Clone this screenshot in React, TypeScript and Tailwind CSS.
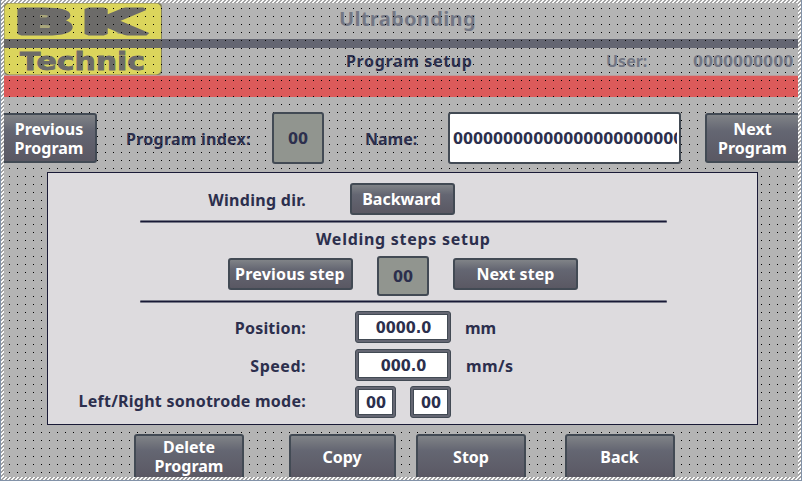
import type { ReactNode } from 'react';

const DIGITS = "font-['DejaVu_Sans_Condensed','DejaVu_Sans',sans-serif] [font-stretch:condensed]";

function Button({ className, children }: { className: string; children: ReactNode }) {
  return (
    <button
      className={`relative z-10 flex shrink-0 items-center justify-center whitespace-nowrap rounded-[3px] border-2 border-[#424a54] bg-linear-to-b from-[#808387] via-[#646672] via-35% to-[#5a5863] text-center leading-[19px] text-white ${className}`}
    >
      {children}
    </button>
  );
}

function Index({ className, children }: { className: string; children: ReactNode }) {
  return (
    <div
      className={`relative z-10 flex w-[52px] shrink-0 items-center justify-center rounded-[3px] border-2 border-[#424a54] bg-[#91958f] ${DIGITS} ${className}`}
    >
      {children}
    </div>
  );
}

function Field({ className, children }: { className: string; children: ReactNode }) {
  return (
    <div className={`h-8 shrink-0 rounded-[3px] border border-[#424a54] bg-[#646672] p-[2px] ${className}`}>
      <div className={`flex h-full items-center justify-center border border-[#424a54] bg-white pl-[1px] ${DIGITS}`}>
        {children}
      </div>
    </div>
  );
}

function Label({ className = '', children }: { className?: string; children: ReactNode }) {
  return <div className={`w-[258px] shrink-0 text-right ${className}`}>{children}</div>;
}

function Divider({ className }: { className: string }) {
  return <div className={`ml-[92px] h-[3px] w-[527px] rounded-full border-y border-[#777988] bg-[#191a36] ${className}`} />;
}

function GridDots() {
  return (
    <svg className="pointer-events-none absolute inset-0 z-[5] h-full w-full" shapeRendering="crispEdges">
      <defs>
        <pattern id="grid-dots" x="5" y="5" width="8" height="8" patternUnits="userSpaceOnUse">
          <rect width="1" height="1" fill="#000" />
        </pattern>
      </defs>
      <rect width="100%" height="100%" fill="url(#grid-dots)" />
    </svg>
  );
}

function Logo() {
  return (
    <svg className="block h-[72px] w-[158px] shrink-0" viewBox="0 0 158 72">
      <rect width="158" height="72" rx="4" fill="#85835f" />
      <rect x="0.5" y="0.5" width="156.5" height="71" rx="5" fill="#dbd55c" />
      <rect x="33" y="8" width="20" height="19" fill="#a9a67a" />
      <path d="M104 21L114 31H122L110 19Z" fill="#a9a67a" />
      <g
        fontFamily="DejaVu Sans"
        fontWeight="bold"
        fontSize="33"
        fill="#6c6b69"
        stroke="#6c6b69"
        strokeWidth="3.2"
        strokeLinejoin="bevel"
      >
        <text x="10" y="31.2" textLength="60.5" lengthAdjust="spacingAndGlyphs">B</text>
        <text x="77" y="31.2" textLength="63" lengthAdjust="spacingAndGlyphs">K</text>
      </g>
      <rect y="36" width="158" height="9" fill="#6a6968" />
      <text
        x="16"
        y="67"
        fontFamily="DejaVu Sans"
        fontWeight="bold"
        fontSize="24.5"
        textLength="125"
        lengthAdjust="spacingAndGlyphs"
        fill="#6c6b69"
        stroke="#6c6b69"
        strokeWidth="0.8"
      >
        Technic
      </text>
    </svg>
  );
}

export default function App() {
  return (
    <div className="h-[481px] w-[802px] border border-t-0 border-[#8292a8] bg-[repeating-linear-gradient(135deg,#a2a2a2_0,#a2a2a2_0.9px,#fbfbfb_0.9px,#fbfbfb_2.828px)] px-[3px] pt-[3px] font-['Noto_Sans',sans-serif] text-[16px] leading-[19px] font-bold text-[#2c2f4d]">
      <div className="relative flex h-[474px] w-[794px] flex-col overflow-hidden bg-[#b4b4b4]">
        <GridDots />

        <header className="flex h-[72px] shrink-0">
          <Logo />
          <div className="flex flex-1 flex-col">
            <div className="h-9 pl-[177px] text-[20px] leading-[32px] tracking-[0.35px] text-[#737784]">Ultrabonding</div>
            <div className="h-[9px] bg-[#646672]" />
            <div className="flex h-[27px] pt-[4px]">
              <span className="ml-[184px] w-[260px] shrink-0 tracking-[0.65px]">Program setup</span>
              <span className="w-[87px] shrink-0 text-[#737784]">User:</span>
              <span className={`shrink-0 text-[#737784] ${DIGITS}`}>0000000000</span>
            </div>
          </div>
        </header>
        <div className="h-[22px] shrink-0 border-t border-[#bf9a9a] bg-[#dc5a5a]" />

        <section className="mt-[15px] flex h-[52px] shrink-0 items-center">
          <Button className="-ml-[4px] h-[50px] w-[97px] pt-[1px] pl-[1px]">
            Previous
            <br />
            Program
          </Button>
          <span className="ml-[29px] w-[146px] shrink-0 pt-[2px] tracking-[0.25px]">Program index:</span>
          <Index className="h-[52px]">00</Index>
          <span className="ml-[41px] w-[83px] shrink-0 pt-[2px]">Name:</span>
          <div className="relative z-10 flex h-[52px] w-[233px] shrink-0 items-center rounded-[3px] border-2 border-[#424a54] bg-white pr-[2px] pl-[3px]">
            <span className={`overflow-hidden whitespace-nowrap ${DIGITS}`}>000000000000000000000000</span>
          </div>
          <Button className="ml-[24px] h-[50px] w-[97px] pt-[1px] pr-[2px]">
            Next
            <br />
            Program
          </Button>
        </section>

        <main className="relative z-10 mt-[8px] ml-[43px] h-[253px] w-[711px] shrink-0 border border-[#191a36] bg-[#dddbde]">
          <div className="mt-[10px] flex h-8 items-center">
            <Label className="pt-[2px] tracking-[0.3px]">Winding dir.</Label>
            <Button className="ml-[44px] h-8 w-[105px] pr-[2px]">Backward</Button>
          </div>
          <Divider className="mt-[5px]" />
          <h2 className="h-[33px] pt-[7px] pl-[268px] tracking-[0.72px]">Welding steps setup</h2>
          <div className="flex h-10 items-center">
            <Button className="-mt-[4px] ml-[180px] h-8 w-[125px] pr-[1px] tracking-[0.2px]">Previous step</Button>
            <Index className="ml-[24px] h-10">00</Index>
            <Button className="-mt-[4px] ml-[24px] h-8 w-[125px] tracking-[0.1px]">Next step</Button>
          </div>
          <Divider className="mt-[4px]" />
          <div className="mt-[8px] flex h-8 items-center">
            <Label className="pt-[2px] tracking-[0.2px]">Position:</Label>
            <Field className="ml-[49px] w-24">0000.0</Field>
            <span className="ml-[14px] pt-[2px]">mm</span>
          </div>
          <div className="mt-[6px] flex h-8 items-center">
            <Label className="pt-[2px] tracking-[0.5px]">Speed:</Label>
            <Field className="ml-[49px] w-24">000.0</Field>
            <span className="ml-[15px] pt-[2px] tracking-[0.4px]">mm/s</span>
          </div>
          <div className="mt-[5px] flex h-8 items-center">
            <Label className="pb-[2px] tracking-[0.25px]">Left/Right sonotrode mode:</Label>
            <Field className="ml-[49px] w-[41px]">00</Field>
            <Field className="ml-[14px] w-[41px]">00</Field>
          </div>
        </main>

        <footer className="mt-[9px] ml-[130px] flex shrink-0">
          <Button className="h-[46px] w-[110px]">
            Delete
            <br />
            Program
          </Button>
          <Button className="ml-[45px] h-[46px] w-[107px] pr-[1px]">Copy</Button>
          <Button className="ml-[20px] h-[46px] w-[110px]">Stop</Button>
          <Button className="ml-[39px] h-[46px] w-[110px] pr-[1px]">Back</Button>
        </footer>
      </div>
    </div>
  );
}
